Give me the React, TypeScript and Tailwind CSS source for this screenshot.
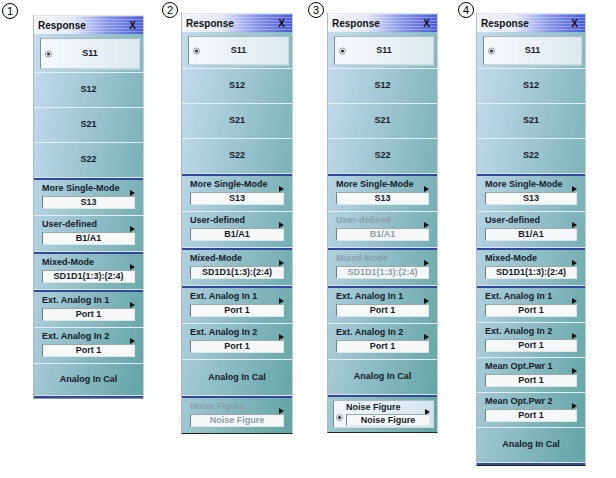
import React from "react";

const TXT = "text-[#151b28]";
const DIS = "text-[#8c9ea6]";

function Num({ n, cls }: { n: string; cls: string }) {
  return (
    <div
      className={`w-[16px] h-[16px] shrink-0 rounded-full border border-black flex items-center justify-center text-[11px] leading-none text-black ${cls}`}
    >
      {n}
    </div>
  );
}

function Arrow() {
  return (
    <svg width="5" height="6" viewBox="0 0 5 6" className="mb-[-2px] shrink-0">
      <path d="M0 0L5 3L0 6Z" fill="#111" />
    </svg>
  );
}

function Radio() {
  return (
    <div className="w-[7px] h-[7px] rounded-full border border-[#8a98a2] bg-white flex items-center justify-center shrink-0">
      <div className="w-[3px] h-[3px] rounded-full bg-[#222]" />
    </div>
  );
}

function Header() {
  return (
    <div className="h-[19px] flex items-center justify-between pl-[4px] pr-[7px] border-t border-[#dfe3f2] bg-[repeating-linear-gradient(to_bottom,rgba(255,255,255,0.3)_0px,rgba(255,255,255,0.3)_1px,transparent_1px,transparent_3px),linear-gradient(to_right,#f4f5fb_0%,#e4e8f8_35%,#8593e6_68%,#4a5cd4_100%)]">
      <span className="text-[10px] font-bold text-[#111]">Response</span>
      <span className="text-[10px] font-bold text-[#111]">X</span>
    </div>
  );
}

function Sep() {
  return <div className="h-[1px] bg-[#e4eff3]" />;
}

function Blue() {
  return (
    <div className="h-[3px] flex flex-col">
      <div className="h-[1px] bg-[#d6e7ee]" />
      <div className="h-[2px] bg-[#33479c]" />
    </div>
  );
}

function S11({ hcls }: { hcls: string }) {
  return (
    <div className={`${hcls} flex flex-col pt-[4px] pb-[3px] pl-[6px] pr-[3px]`}>
      <div className="flex-1 relative flex items-center justify-center border border-t-[#a9b8c2] border-l-[#7d8d98] border-r-[#c9d9e2] border-b-[#c9d9e2] bg-[linear-gradient(to_right,#f6f9fb,#dde9ef)] shadow-[0_1px_0_#b9ccd6]">
        <div className="absolute left-[4px] top-1/2 -translate-y-1/2">
          <Radio />
        </div>
        <span className={`text-[9px] font-bold ${TXT}`}>S11</span>
      </div>
    </div>
  );
}

function SBtn({ label }: { label: string }) {
  return (
    <div className="h-[34px] flex items-center justify-center">
      <span className={`text-[9px] font-bold ${TXT}`}>{label}</span>
    </div>
  );
}

function Group({
  label,
  value,
  hcls,
  dis,
}: {
  label: string;
  value: string;
  hcls: string;
  dis?: boolean;
}) {
  const c = dis ? DIS : TXT;
  return (
    <div className={`${hcls} flex flex-col pt-[3px] pl-[8px] pr-[8px]`}>
      <div className="h-[11px] flex items-end justify-between">
        <span className={`text-[9px] font-bold leading-[11px] ${c}`}>{label}</span>
        <Arrow />
      </div>
      <div className="mt-[2px] h-[13px] flex items-center justify-center bg-[#f6f8f8] border border-t-[#9aa8ac] border-l-[#6f7f84] border-r-[#dde7e9] border-b-[#dde7e9]">
        <span className={`text-[9px] font-bold leading-[11px] ${c}`}>{value}</span>
      </div>
    </div>
  );
}

function SelGroup({ label, value }: { label: string; value: string }) {
  return (
    <div className="h-[35px] flex flex-col pt-[3px] pb-[4px] pl-[5px] pr-[3px]">
      <div className="flex-1 flex items-center border border-t-[#a9b8c2] border-l-[#7d8d98] border-r-[#c9d9e2] border-b-[#c9d9e2] bg-[linear-gradient(to_right,#f3f7fa,#d6e5ed)] pl-[2px] pr-[3px]">
        <div className="mt-[6px]">
          <Radio />
        </div>
        <div className="flex-1 flex flex-col pl-[3px]">
          <div className="h-[11px] flex items-end justify-between">
            <span className={`text-[9px] font-bold leading-[11px] ${TXT}`}>{label}</span>
            <Arrow />
          </div>
          <div className="mt-[1px] h-[12px] flex items-center justify-center bg-[#f6f8f8] border border-t-[#9aa8ac] border-l-[#6f7f84] border-r-[#dde7e9] border-b-[#dde7e9]">
            <span className={`text-[9px] font-bold leading-[11px] ${TXT}`}>{value}</span>
          </div>
        </div>
      </div>
    </div>
  );
}

function Action({ label, hcls }: { label: string; hcls: string }) {
  return (
    <div className={`${hcls} flex items-center justify-center`}>
      <span className={`text-[9px] font-bold ${TXT}`}>{label}</span>
    </div>
  );
}

function Panel({ cls, children }: { cls: string; children: React.ReactNode }) {
  return (
    <div
      className={`shrink-0 flex flex-col border-l border-[#a9bcc6] border-r border-r-[#c2d2d8] border-b bg-[linear-gradient(100deg,#c7def0,#62a4a4)] ${cls}`}
    >
      {children}
    </div>
  );
}

function Top({ s11 }: { s11: string }) {
  return (
    <>
      <Header />
      <S11 hcls={s11} />
      <Sep />
      <SBtn label="S12" />
      <Sep />
      <SBtn label="S21" />
      <Sep />
      <SBtn label="S22" />
      <Blue />
    </>
  );
}

export default function App() {
  return (
    <div className="w-[616px] h-[478px] bg-white flex items-start font-['Liberation_Sans',Arial,sans-serif]">
      <Num n="1" cls="ml-[2px] mt-[3px]" />
      <Panel cls="ml-[15px] mt-[15px] w-[111px] border-b-[#8d9ca2]">
        <Top s11="h-[38px]" />
        <Group label="More Single-Mode" value="S13" hcls="h-[35px]" />
        <Sep />
        <Group label="User-defined" value="B1/A1" hcls="h-[35px]" />
        <Blue />
        <Group label="Mixed-Mode" value="SD1D1(1:3):(2:4)" hcls="h-[35px]" />
        <Blue />
        <Group label="Ext. Analog In 1" value="Port 1" hcls="h-[35px]" />
        <Sep />
        <Group label="Ext. Analog In 2" value="Port 1" hcls="h-[35px]" />
        <Sep />
        <Action label="Analog In Cal" hcls="h-[31px]" />
        <Blue />
      </Panel>

      <Num n="2" cls="ml-[18px] mt-[2px]" />
      <Panel cls="ml-[3px] mt-[13px] w-[112px] border-b-[#222]">
        <Top s11="h-[36px]" />
        <Group label="More Single-Mode" value="S13" hcls="h-[35px]" />
        <Sep />
        <Group label="User-defined" value="B1/A1" hcls="h-[35px]" />
        <Blue />
        <Group label="Mixed-Mode" value="SD1D1(1:3):(2:4)" hcls="h-[35px]" />
        <Blue />
        <Group label="Ext. Analog In 1" value="Port 1" hcls="h-[35px]" />
        <Sep />
        <Group label="Ext. Analog In 2" value="Port 1" hcls="h-[35px]" />
        <Sep />
        <Action label="Analog In Cal" hcls="h-[35px]" />
        <Blue />
        <Group label="Noise Figure" value="Noise Figure" hcls="h-[35px]" dis />
      </Panel>

      <Num n="3" cls="ml-[15px] mt-[2px]" />
      <Panel cls="ml-[3px] mt-[13px] w-[111px] border-b-[#222]">
        <Top s11="h-[36px]" />
        <Group label="More Single-Mode" value="S13" hcls="h-[35px]" />
        <Sep />
        <Group label="User-defined" value="B1/A1" hcls="h-[35px]" dis />
        <Blue />
        <Group label="Mixed-Mode" value="SD1D1(1:3):(2:4)" hcls="h-[35px]" dis />
        <Blue />
        <Group label="Ext. Analog In 1" value="Port 1" hcls="h-[35px]" />
        <Sep />
        <Group label="Ext. Analog In 2" value="Port 1" hcls="h-[35px]" />
        <Sep />
        <Action label="Analog In Cal" hcls="h-[34px]" />
        <Blue />
        <SelGroup label="Noise Figure" value="Noise Figure" />
      </Panel>

      <Num n="4" cls="ml-[20px] mt-[2px]" />
      <Panel cls="ml-[2px] mt-[13px] w-[110px] border-b-[#222]">
        <Top s11="h-[36px]" />
        <Group label="More Single-Mode" value="S13" hcls="h-[35px]" />
        <Sep />
        <Group label="User-defined" value="B1/A1" hcls="h-[35px]" />
        <Blue />
        <Group label="Mixed-Mode" value="SD1D1(1:3):(2:4)" hcls="h-[35px]" />
        <Blue />
        <Group label="Ext. Analog In 1" value="Port 1" hcls="h-[34px]" />
        <Sep />
        <Group label="Ext. Analog In 2" value="Port 1" hcls="h-[34px]" />
        <Sep />
        <Group label="Mean Opt.Pwr 1" value="Port 1" hcls="h-[34px]" />
        <Sep />
        <Group label="Mean Opt.Pwr 2" value="Port 1" hcls="h-[34px]" />
        <Sep />
        <Action label="Analog In Cal" hcls="h-[34px]" />
        <Blue />
      </Panel>
    </div>
  );
}
